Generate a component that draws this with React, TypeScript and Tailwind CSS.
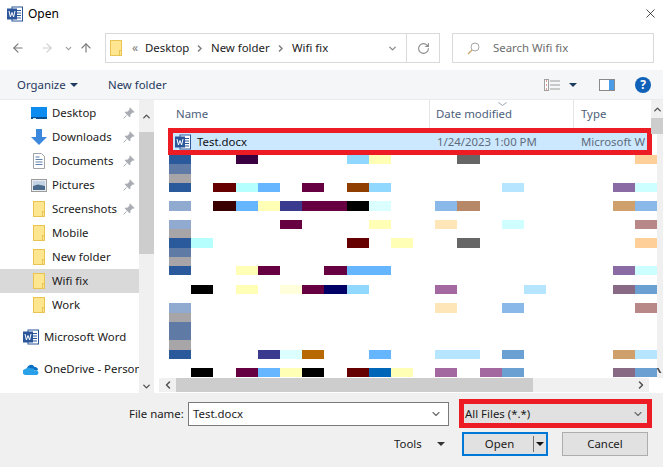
import React from "react";
import { ArrowLeft, ArrowRight, ArrowUp, ChevronDown, ChevronUp, ChevronLeft, ChevronRight, RotateCw, X } from "lucide-react";

const FONT = "font-['Noto_Sans','Open_Sans',sans-serif]";

const B = "#2a5a9c", S = "#5f7aa5", G = "#a7a5a7", L = "#90aad0";
const CY = "#b6ffff", CL = "#dbffff", CC = "#ccffff", SK = "#66b6ff", AZ = "#90d8ff", PB = "#b6e6ff", YL = "#ffffb6", PY = "#ffffdb";
const MG = "#660040", MR = "#660000", DK = "#3a0000", IN = "#3a3a8f", NV = "#000066", BK = "#000000", GR = "#666666";
const PE = "#ffcf99", CR = "#ffe6b8", TN = "#d0a06c", BR = "#b78868", RO = "#b88888", PU = "#8a6ba3", MV = "#a368a0", GP = "#886a85", MB = "#6ba0d3", LB = "#8ab8e8";

// row, col, span, colour
const blocks: [number, number, number, string][] = [
  [0, 0, 1, B], [0, 3, 1, "#3a0040"], [0, 8, 1, AZ], [0, 9, 1, YL], [0, 13, 1, GR], [0, 21, 1, PE],
  [1, 0, 1, S], [2, 0, 1, G],
  [3, 0, 1, B], [3, 2, 1, MR], [3, 3, 1, CY], [3, 4, 1, SK], [3, 6, 1, MG], [3, 8, 1, "#8f3e00"], [3, 9, 1, AZ], [3, 15, 1, PB], [3, 20, 1, PU], [3, 21, 1, CC],
  [5, 0, 1, L], [5, 2, 1, DK], [5, 3, 1, SK], [5, 4, 1, YL], [5, 5, 1, IN], [5, 6, 2, MG], [5, 8, 1, BK], [5, 9, 1, CL], [5, 12, 1, LB], [5, 13, 1, BR], [5, 20, 1, TN], [5, 21, 1, LB],
  [7, 0, 1, L], [7, 5, 1, MG], [7, 9, 1, YL], [7, 12, 1, CR], [7, 15, 1, "#d0ffff"], [7, 21, 1, RO],
  [8, 0, 1, G],
  [9, 0, 1, B], [9, 1, 1, CY], [9, 8, 1, MR], [9, 10, 1, YL], [9, 13, 1, GR], [9, 21, 1, PE],
  [10, 0, 1, S], [11, 0, 1, G],
  [12, 0, 1, B], [12, 3, 1, YL], [12, 4, 1, MG], [12, 7, 1, MG], [12, 8, 2, SK], [12, 20, 1, PU], [12, 21, 1, CC],
  [14, 1, 1, BK], [14, 3, 1, YL], [14, 5, 1, PY], [14, 6, 1, MG], [14, 7, 1, NV], [14, 8, 1, AZ], [14, 12, 1, MV], [14, 16, 1, PB], [14, 20, 1, GP], [14, 21, 1, MB],
  [16, 0, 1, L], [16, 12, 1, CR], [16, 15, 1, LB], [16, 21, 1, RO],
  [17, 0, 1, G], [18, 0, 1, S], [19, 0, 1, S], [20, 0, 1, G],
  [21, 0, 1, B], [21, 4, 1, IN], [21, 5, 1, CL], [21, 6, 1, "#b86800"], [21, 9, 1, SK], [21, 12, 2, PB], [21, 15, 1, MB], [21, 20, 1, TN], [21, 21, 1, PB],
  [23, 1, 1, BK], [23, 3, 1, MG], [23, 4, 1, SK], [23, 5, 1, YL], [23, 6, 1, BK], [23, 8, 1, MR], [23, 9, 1, "#0066b8"], [23, 10, 1, YL], [23, 12, 1, MV], [23, 14, 1, MV], [23, 15, 1, MB], [23, 20, 1, GP], [23, 21, 1, MB],
];

const WordIcon = ({ size = 16 }: { size?: number }) => (
  <svg width={size} height={size} viewBox="0 0 16 16" className="shrink-0">
    <rect x="5" y="1" width="10.5" height="14" fill="#fff" stroke="#2b579a" />
    <path d="M10 4.5h4M10 7h4M10 9.5h4M10 12h4" stroke="#2b579a" />
    <rect x="0" y="2.5" width="10" height="11" fill="#2b579a" />
    <path d="M2 5l1.4 6 1.6-4.5L6.6 11 8 5" fill="none" stroke="#fff" strokeWidth="1" />
  </svg>
);

const FolderIcon = ({ w = 12, h = 16 }: { w?: number; h?: number }) => (
  <svg width={w} height={h} viewBox="0 0 12 16" className="shrink-0" preserveAspectRatio="none">
    <rect x="0.5" y="0.5" width="11" height="15" fill="#fde68f" stroke="#e8c452" />
    <rect x="9" y="10" width="3" height="6" fill="#e8c452" />
    <rect x="10" y="11" width="1" height="4" fill="#fde68f" />
  </svg>
);

const PinIcon = () => (
  <svg width="12" height="12" viewBox="0 0 12 12" className="shrink-0">
    <path d="M7 0.5l4.5 4.5-1 .8-.8-.3L7.3 7.8l.2 1.7-1 .8L1.8 5.6l.8-1 1.7.2 2.3-2.4-.3-.8z" fill="#a9adb3" />
    <path d="M3.5 8.5L0.5 11.5" stroke="#a9adb3" />
  </svg>
);

const DesktopIcon = () => (
  <svg width="16" height="12" viewBox="0 0 16 12">
    <rect width="16" height="12" fill="#0d8cf0" />
    <rect y="10" width="16" height="2" fill="#0a4f8f" />
    <rect x="2" y="11" width="3" height="1" fill="#cfe8ff" />
  </svg>
);

const DownloadIcon = () => (
  <svg width="16" height="16" viewBox="0 0 16 16">
    <path d="M5 0h6v8h5l-8 8-8-8h5z" fill="#3b88dc" />
  </svg>
);

const DocIcon = () => (
  <svg width="12" height="16" viewBox="0 0 12 16">
    <path d="M.5.5h8l3 3v12H.5z" fill="#fff" stroke="#a0a4a8" />
    <path d="M2.5 4h4M2.5 6.5h7M2.5 9h7M2.5 11.5h7" stroke="#5b7fa8" />
  </svg>
);

const PictureIcon = () => (
  <svg width="16" height="13" viewBox="0 0 16 13">
    <rect x="0.5" y="0.5" width="15" height="12" fill="#e9edf2" stroke="#9b9b9b" />
    <rect x="2" y="2" width="12" height="5" fill="#c3d3e4" />
    <path d="M2 7l5-1.5L14 7v4H2z" fill="#4a6a8c" />
  </svg>
);

const CloudIcon = () => (
  <svg width="16" height="11" viewBox="0 0 16 11" className="shrink-0">
    <path d="M4 4.5A4 4 0 0 1 11.5 3 3 3 0 0 1 15 6H7z" fill="#0a6fc2" />
    <path d="M3 11a3 3 0 0 1-.5-6A3.5 3.5 0 0 1 8 4.5 2.8 2.8 0 0 1 11.5 6.5 2.3 2.3 0 0 1 14 11z" fill="#2aa0e8" />
  </svg>
);

const Caret = ({ color = "#1f3a5f" }: { color?: string }) => (
  <svg width="8" height="4" viewBox="0 0 8 4" className="shrink-0">
    <path d="M0 0h8L4 4z" fill={color} />
  </svg>
);

const Sep = () => (
  <svg width="5" height="7" viewBox="0 0 5 7" className="shrink-0">
    <path d="M1 0.5L4 3.5 1 6.5" fill="none" stroke="#7a7a7a" strokeWidth="1.4" />
  </svg>
);

const navItems: { label: string; icon: React.ReactNode; pin?: boolean }[] = [
  { label: "Desktop", icon: <DesktopIcon />, pin: true },
  { label: "Downloads", icon: <DownloadIcon />, pin: true },
  { label: "Documents", icon: <DocIcon />, pin: true },
  { label: "Pictures", icon: <PictureIcon />, pin: true },
  { label: "Screenshots", icon: <FolderIcon />, pin: true },
  { label: "Mobile", icon: <FolderIcon /> },
  { label: "New folder", icon: <FolderIcon /> },
  { label: "Wifi fix", icon: <FolderIcon /> },
  { label: "Work", icon: <FolderIcon /> },
];

const Sidebar = () => (
  <div className="w-[155px] flex shrink-0">
    <div className="w-[139px] bg-white pt-px flex flex-col overflow-hidden">
      {navItems.map((item) => (
        <div
          key={item.label}
          className={`h-6 shrink-0 flex items-center ${item.label === "Wifi fix" ? "bg-[#d9d9d9]" : ""}`}
        >
          <div className="w-4 ml-[31px] mr-[5px] flex justify-center shrink-0">{item.icon}</div>
          <span className="text-[#1a1a1a] flex-1">{item.label}</span>
          {item.pin && <div className="mr-[4px]"><PinIcon /></div>}
        </div>
      ))}
      <div className="h-6 mt-2 shrink-0 flex items-center pl-[23px] gap-[5px] whitespace-nowrap text-[#1a1a1a]">
        <WordIcon />
        <span>Microsoft Word</span>
      </div>
      <div className="h-6 mt-2 shrink-0 flex items-center pl-[23px] gap-[5px] whitespace-nowrap text-[#1a1a1a]">
        <CloudIcon />
        <span>OneDrive - Personal</span>
      </div>
    </div>
    <div className="w-[15px] bg-[#f0f0f0] flex flex-col items-center">
      <div className="h-[32px] flex items-center justify-center shrink-0">
        <ChevronUp size={11} strokeWidth={3} color="#505050" />
      </div>
      <div className="h-[122px] w-full bg-[#cdcdcd] shrink-0" />
      <div className="flex-1" />
      <div className="h-[14px] flex items-center justify-center shrink-0">
        <ChevronDown size={11} strokeWidth={3} color="#505050" />
      </div>
    </div>
    <div className="w-px bg-white" />
  </div>
);

const Mosaic = () => (
  <div className="ml-[14px] h-[223px] grid grid-cols-[repeat(22,22.2px)] grid-rows-[repeat(24,9.28px)]">
    {blocks.map(([row, col, span, color]) => (
      <div
        key={`${row}-${col}`}
        style={{ gridRow: row + 1, gridColumn: `${col + 1} / span ${span}`, backgroundColor: color }}
      />
    ))}
  </div>
);

const FilePane = () => (
  <div className="flex-1 flex flex-col min-w-0 bg-white">
    <div className="flex-1 flex min-h-0">
      <div className="flex-1 flex flex-col min-w-0">
        <div className="h-[28px] flex items-stretch text-[#4c607a] relative">
          <div className="w-[275px] pl-[21px] border-r border-[#e5e5e5] flex items-center">Name</div>
          <div className="w-[144px] pl-[6px] border-r border-[#e5e5e5] flex items-center">Date modified</div>
          <div className="pl-[7px] flex items-center">Type</div>
          <svg width="9" height="4" viewBox="0 0 9 4" className="absolute left-[343px] top-[2px]">
            <path d="M.5.5l4 3 4-3" fill="none" stroke="#9aa3ad" />
          </svg>
        </div>
        <div className="ml-[13px] w-[484px] h-[27px] border-[5px] border-[#ed1c24] bg-[#cce8ff] flex items-center overflow-hidden whitespace-nowrap">
          <div className="ml-[2px] mr-[6px]"><WordIcon /></div>
          <span className="text-[#111] w-[240px] shrink-0">Test.docx</span>
          <span className="text-[#5f6b7a] w-[144px] shrink-0">1/24/2023 1:00 PM</span>
          <span className="text-[#5f6b7a]">Microsoft W</span>
        </div>
        <Mosaic />
      </div>
      <div className="w-[6px] bg-[#f0f0f0] relative">
        <div className="absolute top-0 right-0 w-[12px] h-[18px] bg-[#f0f0f0] flex items-center justify-center">
          <ChevronUp size={11} strokeWidth={3} color="#505050" />
        </div>
        <div className="absolute top-[18px] right-0 w-[12px] h-[16px] bg-[#cdcdcd]" />
        <div className="absolute bottom-[5px] left-0 w-[3px] h-[5px] border-r-2 border-[#505050] skew-x-[30deg]" />
      </div>
    </div>
    <div className="h-[14px] mb-px flex">
      <div className="ml-[4px] w-[490px] bg-[#f0f0f0] flex">
        <div className="w-[17px] flex items-center justify-center">
          <ChevronLeft size={12} strokeWidth={3} color="#505050" />
        </div>
        <div className="w-[357px] bg-[#cdcdcd]" />
        <div className="flex-1 flex items-center justify-end pr-[2px]">
          <ChevronRight size={12} strokeWidth={3} color="#505050" />
        </div>
      </div>
      <div className="flex-1 bg-white" />
    </div>
  </div>
);

export default function App() {
  return (
    <div className={`${FONT} text-[11.4px] w-[663px] h-[467px] overflow-hidden flex flex-col bg-white relative`}>
      {/* title bar */}
      <div className="h-[33px] shrink-0 flex items-center pl-[7px] pr-[5px] pb-[6px] gap-[5px]">
        <WordIcon />
        <span className="text-black flex-1 text-[12px]">Open</span>
        <X size={15} strokeWidth={1.2} color="#111" />
      </div>

      {/* address row */}
      <div className="h-[37px] shrink-0 flex items-start">
        <div className="w-[105px] h-[30px] flex items-center pl-[11px] shrink-0">
          <ArrowLeft size={14} strokeWidth={2} color="#7a7a7a" />
          <div className="ml-[15px]"><ArrowRight size={14} strokeWidth={2} color="#cfcfcf" /></div>
          <div className="ml-[10px]"><ChevronDown size={9} strokeWidth={3} color="#9a9a9a" /></div>
          <div className="ml-[6px]"><ArrowUp size={14} strokeWidth={2} color="#7a7a7a" /></div>
        </div>
        <div className="w-[335px] h-[30px] border border-[#d9d9d9] flex items-center shrink-0 text-[#1a1a1a]">
          <div className="ml-[4px] mr-[10px]"><FolderIcon w={12} h={16} /></div>
          <span className="text-[#7a7a7a] text-[12px] w-[13px] leading-none">&laquo;</span>
          <span className="w-[43px]">Desktop</span>
          <div className="mx-[9px]"><Sep /></div>
          <span className="w-[58px] whitespace-nowrap">New folder</span>
          <div className="mx-[9px]"><Sep /></div>
          <span>Wifi fix</span>
          <div className="flex-1" />
          <div className="mr-[8px]"><ChevronDown size={11} strokeWidth={3} color="#8a8a8a" /></div>
          <div className="w-[33px] h-full border-l border-[#d9d9d9] flex items-center justify-center">
            <RotateCw size={13} strokeWidth={2} color="#8a8a8a" />
          </div>
        </div>
        <div className="ml-[12px] w-[202px] h-[30px] border border-[#d9d9d9] flex items-center pl-[14px] shrink-0">
          <svg width="13" height="13" viewBox="0 0 13 13" className="mr-[13px]">
            <circle cx="8" cy="5" r="4" fill="none" stroke="#a8a8a8" />
            <path d="M5 8L1 12" stroke="#c9a76a" strokeWidth="1.3" />
          </svg>
          <span className="text-[#6d6d6d]">Search Wifi fix</span>
        </div>
      </div>

      {/* toolbar */}
      <div className="h-[30px] shrink-0 bg-[#f5f6f7] border-b border-[#ebebeb] flex items-center pl-[17px] pr-[12px] text-[#1f3a5f]">
        <span className="w-[47px]">Organize</span>
        <div className="ml-[6px]"><Caret /></div>
        <span className="ml-[30px]">New folder</span>
        <div className="flex-1" />
        <svg width="16" height="12" viewBox="0 0 16 12">
          <rect x="0.5" y="0.5" width="4" height="11" fill="#fff" stroke="#a0a0a0" />
          <path d="M6 2h10M6 6h10M6 10h10" stroke="#9a9a9a" />
          <path d="M2 2h1M2 6h1M2 10h1" stroke="#c0392b" />
        </svg>
        <div className="ml-[9px]"><Caret /></div>
        <svg width="16" height="12" viewBox="0 0 16 12" className="ml-[22px]">
          <rect x="0.5" y="0.5" width="15" height="11" fill="#fff" stroke="#8a8a8a" />
          <rect x="10" y="1" width="5" height="10" fill="#4a9be8" />
        </svg>
        <div className="ml-[20px] w-4 h-4 rounded-full bg-[#0f62b8] text-white flex items-center justify-center font-bold text-[12px] leading-none">?</div>
      </div>

      {/* body */}
      <div className="h-[293px] shrink-0 flex bg-white">
        <Sidebar />
        <FilePane />
      </div>

      {/* bottom */}
      <div className="flex-1 bg-[#f0f0f0] flex flex-col items-start relative">
        <div className="mt-[6px] flex items-center h-[29px]">
          <span className="ml-[129px] w-[59px] text-[#1a1a1a]">File name:</span>
          <div className="w-[261px] h-[24px] border border-[#7a7a7a] bg-white flex items-center pl-[4px] pr-[6px] text-[#1a1a1a]">
            <span className="flex-1">Test.docx</span>
            <ChevronDown size={12} strokeWidth={2.2} color="#6a6a6a" />
          </div>
          <div className="ml-[10px] w-[193px] h-[29px] border-[5px] border-[#ed1c24] bg-[#e1e1e1] flex items-center pl-px pr-[3px] text-[#1a1a1a]">
            <span className="flex-1">All Files (*.*)</span>
            <ChevronDown size={12} strokeWidth={2.2} color="#6a6a6a" />
          </div>
        </div>
        <div className="mt-[4px] flex items-center h-[24px] text-[#1a1a1a]">
          <span className="ml-[394px] w-[27px]">Tools</span>
          <div className="ml-[16px]"><Caret color="#333" /></div>
          <div className="ml-[17px] w-[86px] h-[24px] border-2 border-[#0078d7] bg-[#e1e1e1] flex items-center">
            <span className="flex-1 text-center pl-[2px]">Open</span>
            <div className="w-px h-[16px] bg-[#707070] mr-[2px]" />
            <div className="mr-[2px]"><Caret color="#111" /></div>
          </div>
          <div className="ml-[14px] w-[86px] h-[24px] border border-[#adadad] bg-[#e1e1e1] flex items-center justify-center">Cancel</div>
        </div>
      </div>
    </div>
  );
}
